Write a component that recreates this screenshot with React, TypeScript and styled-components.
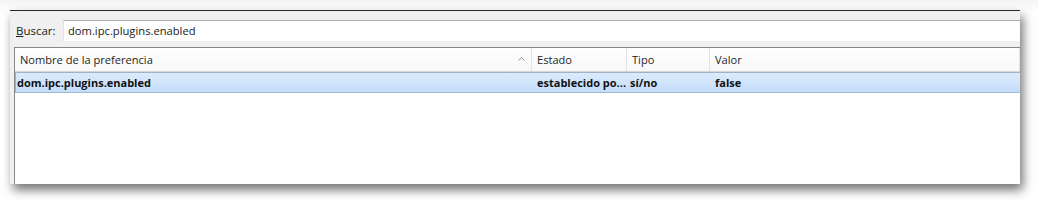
import React from "react";
import styled, { createGlobalStyle } from "styled-components";

const Global = createGlobalStyle`
  html, body { margin: 0; padding: 0; background: #ffffff; }
  body { font-family: "Open Sans", "Noto Sans", sans-serif; }
`;

const Stage = styled.div`
  width: 1038px;
  height: 202px;
  padding: 10px 0 0 10px;
  box-sizing: border-box;
  background: linear-gradient(#f4f4f4, #ffffff 12px);
`;

const Window = styled.div`
  width: 1010px;
  height: 174px;
  background: #f0f0f0;
  border-top: 1px solid #2a2a2a;
  box-sizing: border-box;
  box-shadow: 3px 6px 10px rgba(0, 0, 0, 0.55);
  display: flex;
  flex-direction: column;
  overflow: hidden;
`;

const SearchRow = styled.div`
  display: flex;
  align-items: center;
  height: 22px;
  margin-top: 8px;
  padding-left: 6px;
`;

const Label = styled.label`
  font-size: 11.5px;
  color: #1a1a1a;
  width: 47px;
  u { text-decoration: underline; }
`;

const SearchInput = styled.div`
  flex: 1;
  height: 21px;
  background: #ffffff;
  border-top: 1px solid #abadb3;
  border-left: 1px solid #e2e3ea;
  box-sizing: border-box;
  display: flex;
  align-items: center;
  padding-left: 4px;
  font-size: 11.2px;
  color: #1a1a1a;
`;

const Tree = styled.div`
  flex: 1;
  margin: 6px 0 0 4px;
  background: #ffffff;
  border-top: 1px solid #828790;
  border-left: 1px solid #828790;
`;

const cols = "517px 95px 83px 1fr";

const HeaderRow = styled.div`
  display: grid;
  grid-template-columns: ${cols};
  height: 23px;
  background: linear-gradient(#ffffff, #f7f8f9);
  border-bottom: 1px solid #d5d5d5;
`;

const HeaderCell = styled.div`
  position: relative;
  display: flex;
  align-items: center;
  padding-left: 5px;
  font-size: 11.1px;
  color: #1e1e1e;
  border-right: 1px solid #e3e4e6;
`;

const SortArrow = styled.svg`
  position: absolute;
  right: 6px;
  top: 9px;
`;

const Row = styled.div<{ $selected?: boolean }>`
  display: grid;
  grid-template-columns: ${cols};
  height: 19px;
  background: ${(p) =>
    p.$selected ? "linear-gradient(#dcebfc, #c4ddfb)" : "transparent"};
  border-top: 1px solid ${(p) => (p.$selected ? "#9fb3c7" : "transparent")};
  border-bottom: 1px solid ${(p) => (p.$selected ? "#a6b9cc" : "transparent")};
  border-left: 1px solid ${(p) => (p.$selected ? "#9fb3c7" : "transparent")};
`;

const Cell = styled.div<{ $indent?: number }>`
  display: flex;
  align-items: center;
  padding-left: ${(p) => p.$indent ?? 1}px;
  font-size: 11px;
  font-weight: 700;
  color: #111;
  white-space: nowrap;
`;

export default function App() {
  return (
    <>
      <Global />
      <Stage>
        <Window>
          <SearchRow>
            <Label>
              <u>B</u>uscar:
            </Label>
            <SearchInput>dom.ipc.plugins.enabled</SearchInput>
          </SearchRow>
          <Tree>
            <HeaderRow>
              <HeaderCell>
                Nombre de la preferencia
                <SortArrow width="7" height="4" viewBox="0 0 7 4">
                  <path d="M0.5 3.5 L3.5 0.5 L6.5 3.5" fill="none" stroke="#8a8f98" strokeWidth="1" />
                </SortArrow>
              </HeaderCell>
              <HeaderCell>Estado</HeaderCell>
              <HeaderCell>Tipo</HeaderCell>
              <HeaderCell>Valor</HeaderCell>
            </HeaderRow>
            <Row $selected>
              <Cell>dom.ipc.plugins.enabled</Cell>
              <Cell $indent={4}>establecido po...</Cell>
              <Cell $indent={2}>sí/no</Cell>
              <Cell $indent={4}>false</Cell>
            </Row>
          </Tree>
        </Window>
      </Stage>
    </>
  );
}
